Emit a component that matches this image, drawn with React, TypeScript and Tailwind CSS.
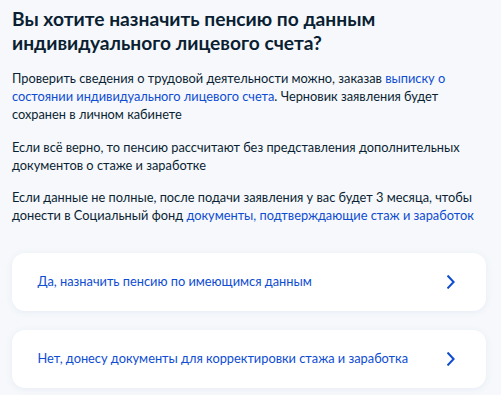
import React from "react";

function Chevron() {
  return (
    <svg width="8" height="14" viewBox="0 0 8 14" fill="none" className="shrink-0">
      <path d="M1.2 1.3L6.6 7L1.2 12.7" stroke="#0d4cd3" strokeWidth="2" strokeLinecap="square" strokeLinejoin="miter" />
    </svg>
  );
}

function Card({ text }: { text: string }) {
  return (
    <div className="flex h-[58px] items-center justify-between rounded-[13px] bg-white pl-[25.5px] pr-[31px] shadow-[0_1px_6px_rgba(102,130,190,0.10)]">
      <span className="mb-[3px] text-[12.8px] leading-[18px] text-[#0d4cd3]">{text}</span>
      <Chevron />
    </div>
  );
}

export default function App() {
  return (
    <div className="min-h-[395px] w-[501px] bg-[#f6f8fb] px-[12px] pt-[7px] font-[Lato,sans-serif] text-[#0b1f33]">
      <h1 className="text-[19.2px] font-bold leading-[24px]">
        Вы хотите назначить пенсию по данным индивидуального лицевого счета?
      </h1>
      <p className="mt-[14px] text-[12.8px] leading-[18px]">
        Проверить сведения о трудовой деятельности можно, заказав{" "}
        <span className="text-[#0d4cd3]">выписку о состоянии индивидуального лицевого счета</span>. Черновик
        заявления будет сохранен в личном кабинете
      </p>
      <p className="mt-[15px] text-[12.8px] leading-[18px]">
        Если всё верно, то пенсию рассчитают без представления дополнительных документов о стаже и заработке
      </p>
      <p className="mt-[14px] text-[12.8px] leading-[18px]">
        Если данные не полные, после подачи заявления у вас будет 3 месяца, чтобы донести в Социальный фонд{" "}
        <span className="text-[#0d4cd3]">документы, подтверждающие стаж и заработок</span>
      </p>
      <div className="mt-[29px] flex flex-col gap-[19px] pr-[3px]">
        <Card text="Да, назначить пенсию по имеющимся данным" />
        <Card text="Нет, донесу документы для корректировки стажа и заработка" />
      </div>
    </div>
  );
}
